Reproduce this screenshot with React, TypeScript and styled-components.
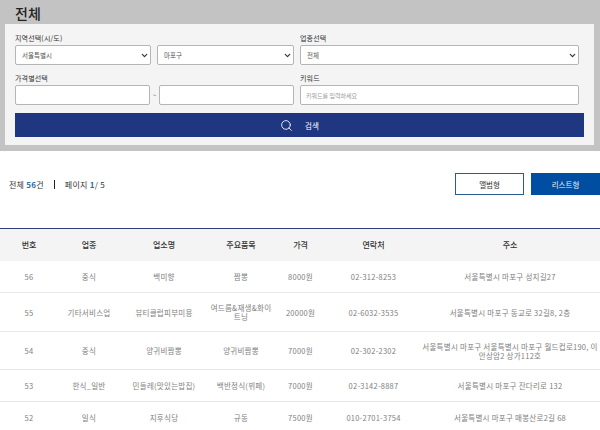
import { createGlobalStyle } from 'styled-components';
import styled from 'styled-components';
import { ChevronDown, Search } from 'lucide-react';

const GlobalStyle = createGlobalStyle`
  html, body {
    margin: 0;
    padding: 0;
    height: 430px;
    overflow: hidden;
    background: #fff;
    font-family: "Noto Sans CJK KR", "Noto Sans", sans-serif;
  }
  * { box-sizing: border-box; }
`;

const rows = [
  { no: 56, kind: '중식', name: '백미향', item: '짬뽕', price: '8000원', tel: '02-312-8253', addr: '서울특별시 마포구 성지길27', h: 32 },
  { no: 55, kind: '기타서비스업', name: '뷰티클럽피부미용', item: '여드름&재생&화이트닝', price: '20000원', tel: '02-6032-3535', addr: '서울특별시 마포구 동교로 32길8, 2층', h: 39 },
  { no: 54, kind: '중식', name: '양귀비짬뽕', item: '양귀비짬뽕', price: '7000원', tel: '02-302-2302', addr: '서울특별시 마포구 서울특별시 마포구 월드컵로190, 이안상암2 상가112호', h: 38 },
  { no: 53, kind: '한식_일반', name: '민들레(맛있는밥집)', item: '백반정식(뷔페)', price: '7000원', tel: '02-3142-8887', addr: '서울특별시 마포구 잔다리로 132', h: 32 },
  { no: 52, kind: '일식', name: '지후식당', item: '규동', price: '7500원', tel: '010-2701-3754', addr: '서울특별시 마포구 매봉산로2길 68', h: 32 },
];

const colWidths = [58, 62, 88, 66, 53, 93, 180];
const headers = ['번호', '업종', '업소명', '주요품목', '가격', '연락처', '주소'];

const Dropdown = ({ value }: { value: string }) => (
  <SelectWrap>
    <Select defaultValue={value}><option>{value}</option></Select>
    <Arrow><ChevronDown size={9} strokeWidth={3.2} /></Arrow>
  </SelectWrap>
);

const App = () => {
  return (
    <>
      <GlobalStyle />
      <SearchArea>
        <Title>전체</Title>
        <Panel>
          <FieldGrid>
            <Field>
              <Label>지역선택(시/도)</Label>
              <SelectPair>
                <Dropdown value="서울특별시" />
                <Dropdown value="마포구" />
              </SelectPair>
            </Field>
            <Field>
              <Label>업종선택</Label>
              <Dropdown value="전체" />
            </Field>
            <Field>
              <Label>가격별선택</Label>
              <PriceRange>
                <Input />
                <Tilde>~</Tilde>
                <Input />
              </PriceRange>
            </Field>
            <Field>
              <Label>키워드</Label>
              <Input placeholder="키워드를 입력하세요" />
            </Field>
          </FieldGrid>
          <SearchButton>
            <Search size={13} strokeWidth={1.6} />
            <span>검색</span>
          </SearchButton>
        </Panel>
      </SearchArea>

      <Summary>
        <Counts>
          <span>전체 <Num>56</Num>건</span>
          <Divider />
          <span>페이지 <Num>1</Num>/ 5</span>
        </Counts>
        <ViewButtons>
          <ViewButton>앨범형</ViewButton>
          <ViewButton $active>리스트형</ViewButton>
        </ViewButtons>
      </Summary>

      <Table>
        <colgroup>
          {colWidths.map((w, i) => <col key={i} style={{ width: w }} />)}
        </colgroup>
        <thead>
          <tr>
            {headers.map((h) => <Th key={h}>{h}</Th>)}
          </tr>
        </thead>
        <tbody>
          {rows.map((r) => (
            <Row key={r.no} $h={r.h}>
              <Td>{r.no}</Td>
              <Td>{r.kind}</Td>
              <Td>{r.name}</Td>
              <Td>{r.item}</Td>
              <Td>{r.price}</Td>
              <Td>{r.tel}</Td>
              <Td>{r.addr}</Td>
            </Row>
          ))}
        </tbody>
      </Table>
    </>
  );
};

const SearchArea = styled.div`
  height: 151px;
  background: #c3c3c3;
  padding: 0 6px 0 5px;
`;

const Title = styled.h1`
  margin: 0;
  height: 24px;
  padding: 5px 0 0 10px;
  font-size: 14px;
  line-height: 17px;
  font-weight: 500;
  color: #222;
`;

const Panel = styled.div`
  height: 121px;
  background: #f4f4f4;
  padding: 10px 10px 0;
`;

const FieldGrid = styled.div`
  display: grid;
  grid-template-columns: 279px 279px;
  column-gap: 6px;
  row-gap: 9px;
`;

const Field = styled.div`
  display: flex;
  flex-direction: column;
  gap: 3px;
`;

const Label = styled.label`
  font-size: 7px;
  line-height: 8px;
  letter-spacing: 0.15px;
  color: #333;
`;

const SelectPair = styled.div`
  display: grid;
  grid-template-columns: 136px 137px;
  column-gap: 6px;
`;

const SelectWrap = styled.div`
  position: relative;
  height: 20px;
`;

const Select = styled.select`
  display: block;
  width: 100%;
  height: 20px;
  padding: 0 12px 0 6px;
  appearance: none;
  background: #fff;
  border: 1px solid #b5b5b5;
  border-radius: 2px;
  font-family: inherit;
  font-size: 6.5px;
  color: #555;
`;

const Arrow = styled.span`
  position: absolute;
  top: 6px;
  right: 2px;
  display: flex;
  color: #333;
  pointer-events: none;
`;

const PriceRange = styled.div`
  display: grid;
  grid-template-columns: 135px 1fr 135px;
  align-items: center;
`;

const Tilde = styled.span`
  font-size: 7px;
  color: #888;
  text-align: center;
`;

const Input = styled.input`
  width: 100%;
  height: 20px;
  padding: 0 5px;
  background: #fff;
  border: 1px solid #b5b5b5;
  border-radius: 2px;
  font-family: inherit;
  font-size: 6px;
  color: #555;
  &::placeholder { color: #999; }
`;

const SearchButton = styled.button`
  display: flex;
  align-items: center;
  justify-content: center;
  gap: 12px;
  width: 569px;
  height: 24px;
  margin-top: 8px;
  padding: 0;
  background: #1f3681;
  border: 0;
  color: #fff;
  font-family: inherit;
  font-size: 7.5px;
`;

const Summary = styled.div`
  display: flex;
  align-items: flex-start;
  justify-content: space-between;
  height: 77px;
  padding: 22px 0 0 9px;
`;

const Counts = styled.div`
  display: flex;
  align-items: center;
  gap: 10px;
  height: 22px;
  font-size: 8px;
  letter-spacing: 0.25px;
  color: #333;
`;

const Num = styled.b`
  color: #2a6ba5;
`;

const Divider = styled.i`
  width: 1px;
  height: 9px;
  background: #222;
`;

const ViewButtons = styled.div`
  display: flex;
  gap: 7px;
`;

const ViewButton = styled.button<{ $active?: boolean }>`
  width: 69px;
  height: 22px;
  padding: 0;
  border: 1px solid ${(p) => (p.$active ? '#004ea2' : '#2a5d8f')};
  background: ${(p) => (p.$active ? '#004ea2' : '#fff')};
  color: ${(p) => (p.$active ? '#e8eef6' : '#333')};
  font-family: inherit;
  font-size: 7.5px;
`;

const Table = styled.table`
  width: 600px;
  table-layout: fixed;
  border-collapse: collapse;
  border-top: 1px solid #2c3f7a;
`;

const Th = styled.th`
  height: 32px;
  padding: 0;
  background: #f4f4f4;
  font-size: 8px;
  font-weight: 500;
  color: #333;
  text-align: center;
`;

const Row = styled.tr<{ $h: number }>`
  height: ${(p) => p.$h}px;
  border-bottom: 1px solid #e8e8e8;
`;

const Td = styled.td`
  padding: 0 1px;
  font-size: 7.5px;
  line-height: 9px;
  letter-spacing: 0.25px;
  color: #808080;
  text-align: center;
  word-break: break-all;
`;

export default App;
